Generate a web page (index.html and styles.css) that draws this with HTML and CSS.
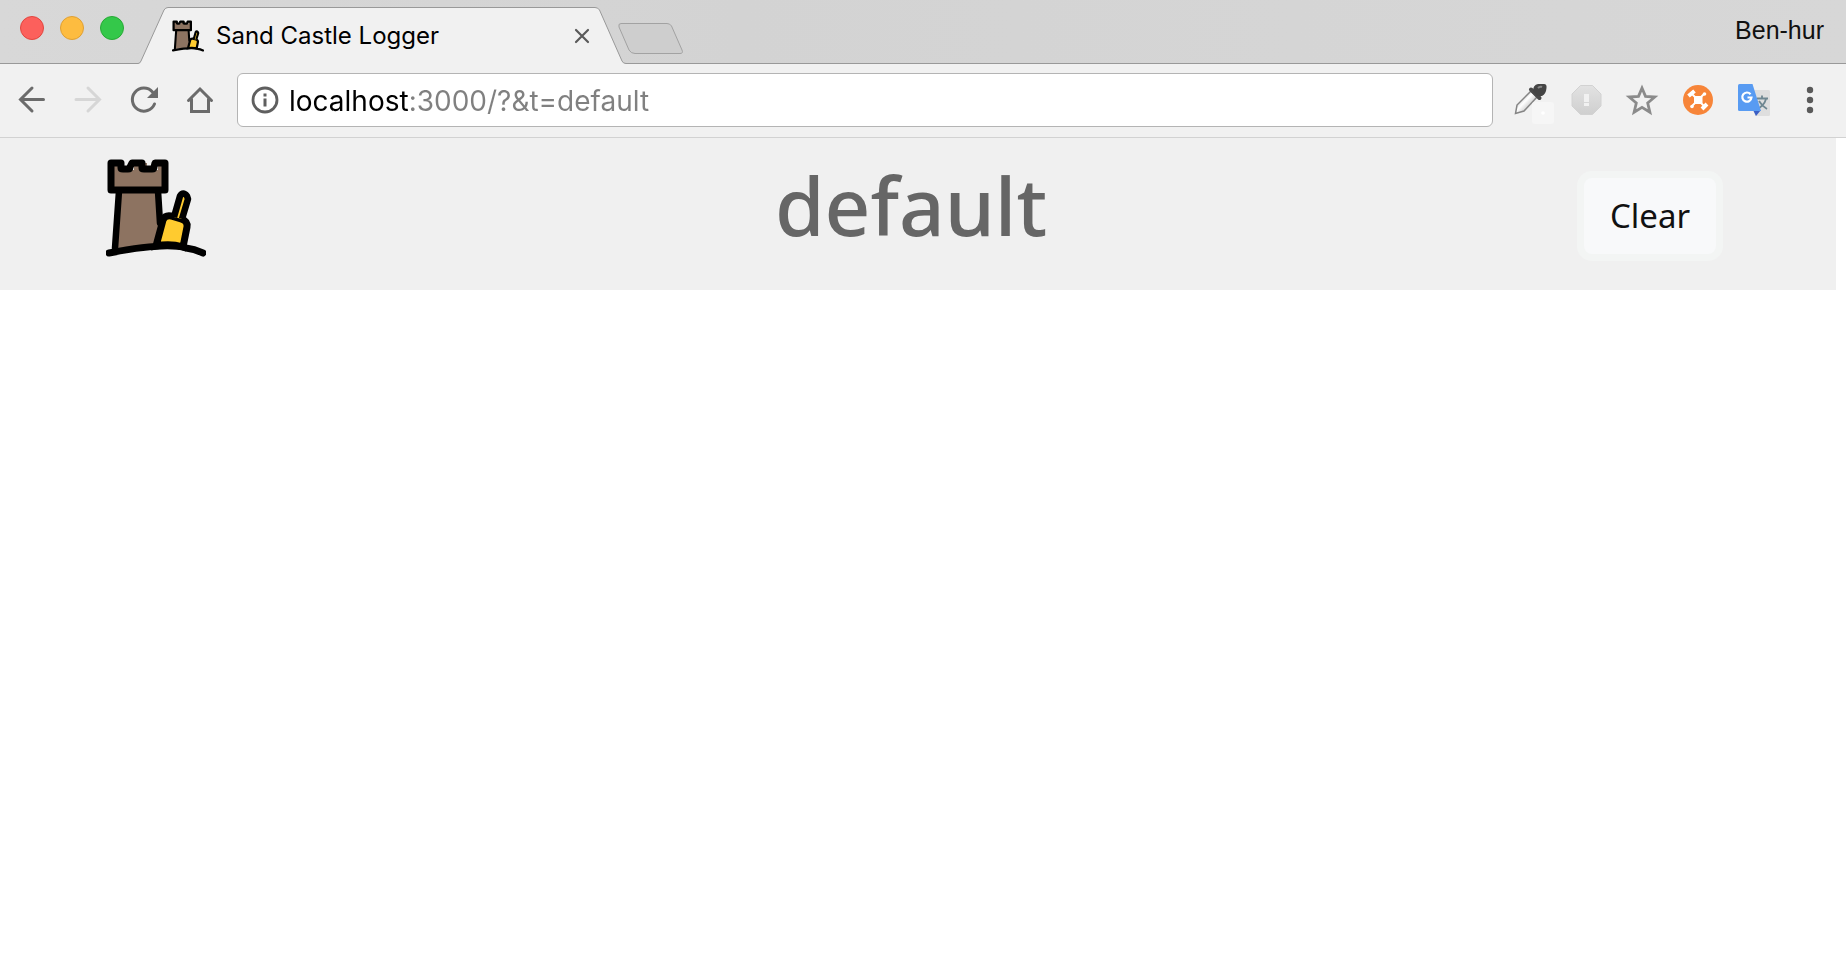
FILE: index.html
```html
<!DOCTYPE html>
<html lang="en">
<head>
<meta charset="utf-8">
<title>Sand Castle Logger</title>
<link rel="stylesheet" href="styles.css">
</head>
<body>
<svg class="symbols" aria-hidden="true">
  <symbol id="castle" viewBox="0 0 100 98">
    <path d="M16 29 L9 90 Q30 86 54 86 L51 29Z" fill="#8d7361"/>
    <path d="M5 4h11v7h12V4h13v7h11V4h7v27H5z" fill="#8d7361"/>
    <g fill="none" stroke="#000" stroke-linecap="round" stroke-linejoin="round">
      <path d="M5 4h10v5q0 1 2 1h5q2 0 2-2l2-4h10v5q0 1 2 1h8q2 0 2-2l1-4h10v27H5z" stroke-width="7"/>
      <path d="M13 32 L9 89 M52 32 L54 64" stroke-width="6.500"/>
    </g>
    <path d="M57 61 Q59 56 65 57 L75 60 Q82 62 81 68 L77 88 Q64 84 50 87Z" fill="#ffcb2f" stroke="#000" stroke-width="7"/>
    <path d="M68 58 L74 37 Q77 32 81 37 L82 40 L76 60" fill="#ffcb2f" stroke="#000" stroke-width="6.500" stroke-linejoin="round"/>
    <path d="M3 94 Q60 83 80 89 Q88 90 97 94" fill="none" stroke="#000" stroke-width="7" stroke-linecap="round"/>
  </symbol>
</svg>

<div class="tabstrip">
  <div class="lights">
    <button class="light close" aria-label="Close window"></button>
    <button class="light minimize" aria-label="Minimize window"></button>
    <button class="light zoom" aria-label="Zoom window"></button>
  </div>
  <div class="tab">
    <svg class="tab-shape" viewBox="0 0 488 57" aria-hidden="true">
      <path d="M0 56.5 Q2 56.500 3 54 L26 3 Q27.500 .5 30 .5 H457 Q460 .5 461.500 3 L484 54 Q485 56.500 488 56.500 V57 H0Z" fill="#f1f1f1"/>
      <path d="M0 56.500 Q2 56.500 3 54 L26 3 Q27.500 .5 30 .5 H457 Q460 .5 461.500 3 L484 54 Q485 56.500 488 56.500" fill="none" stroke="#999"/>
    </svg>
    <svg class="favicon" aria-hidden="true"><use href="#castle"/></svg>
    <span class="tab-title">Sand Castle Logger</span>
    <button class="tab-close" aria-label="Close tab">
      <svg viewBox="0 0 16 16"><path d="M2 2 14 14M14 2 2 14" stroke="#5a5a5a" stroke-width="2.200" stroke-linecap="round"/></svg>
    </button>
  </div>
  <button class="new-tab" aria-label="New tab">
    <svg viewBox="0 0 66 32"><path d="M3 .5 H49 Q52 .5 53.500 3 L64 27 Q65.500 30.500 62 30.500 H17 Q13 30.500 11 27 L1 4 Q0 .5 3 .5Z" fill="#cecece" stroke="#a2a2a2"/></svg>
  </button>
  <button class="profile">Ben-hur</button>
</div>

<div class="toolbar">
  <button class="tool" aria-label="Back"><svg viewBox="0 0 56 54"><path d="M39.500 26.500H17M28 15 16.500 26.500 28 38" class="line"/></svg></button>
  <button class="tool" aria-label="Forward" disabled><svg viewBox="0 0 56 54"><path d="M16 26.500H39M28 15 39.500 26.500 28 38" class="line faint"/></svg></button>
  <button class="tool" aria-label="Reload"><svg viewBox="0 0 56 54"><path d="M38.500 31A11.500 11.500 0 1 1 36.500 19" class="line"/><path d="M42 14V25H31Z" fill="#6b6b6b"/></svg></button>
  <button class="tool" aria-label="Home"><svg viewBox="0 0 56 54"><path d="M16.500 27.500 28 16 39.500 27.500M19.500 26V38.500H36.500V26" class="line"/></svg></button>
  <div class="omnibox">
    <svg class="info" viewBox="0 0 28 28" aria-hidden="true"><circle cx="14" cy="14" r="12" fill="none" stroke="#5f5f5f" stroke-width="2.800"/><path d="M12.500 7.500h3v3h-3zM12.500 12.500h3v8h-3z" fill="#5f5f5f"/></svg>
    <input class="url" type="text" aria-label="Address" value="localhost:3000/?&amp;t=default">
  </div>
  <button class="tool" aria-label="Color picker"><svg viewBox="0 0 56 54">
    <defs><linearGradient id="glass" x1="0" y1="0" x2="1" y2="1"><stop offset="0" stop-color="#777"/><stop offset=".45" stop-color="#fff"/><stop offset="1" stop-color="#888"/></linearGradient></defs>
    <path d="M29 18 15 32 13.500 40.500 22 38 35 24Z" fill="url(#glass)" stroke="#858585" stroke-width="1.500"/>
    <path d="M29 16.500 37.500 25" stroke="#4a4a4a" stroke-width="4" stroke-linecap="round"/>
    <path d="M31 18Q31 12 36 11H42Q45 11 44.500 15Q44 21 40 23L35 23Z" fill="#454545"/>
    <path d="M36 15q2-2 4-1" stroke="#888" stroke-width="2" fill="none"/>
    <rect x="30" y="29" width="22" height="22" rx="3" fill="#f6f6f6"/><circle cx="41" cy="40" r="1.800" fill="#fff"/>
  </svg></button>
  <button class="tool" aria-label="Blocker"><svg viewBox="0 0 56 54">
    <defs><linearGradient id="oct" x1="0" y1="0" x2="0" y2="1"><stop offset="0" stop-color="#e2e2e2"/><stop offset="1" stop-color="#cfcfcf"/></linearGradient></defs>
    <path d="M22.500 12.500h12l8.500 8.500v12l-8.500 8.500h-12L14 33V21Z" fill="url(#oct)" stroke="#d2d2d2"/><path d="M26 21h5v8h-5zM26 30h5v3h-5z" fill="#f1f1f1"/>
  </svg></button>
  <button class="tool" aria-label="Bookmark"><svg viewBox="0 0 56 54"><path d="M28 15 31.500 23.300 40.800 24 33.700 30 35.900 39.200 28 34.400 20.100 39.200 22.300 30 15.200 24 24.500 23.300Z" fill="none" stroke="#8b8b8b" stroke-width="2.800"/></svg></button>
  <button class="tool" aria-label="Extension"><svg viewBox="0 0 56 54">
    <circle cx="28" cy="27" r="15" fill="#f78539"/>
    <g stroke="#fff"><path d="M22 21 34 33M34 21 22 33" stroke-width="1.800"/><path d="M18.500 23 24.500 18M32 36 37 31" stroke-width="4"/></g>
    <rect x="24" y="23" width="8.500" height="8" rx="1.500" fill="#fff"/><circle cx="34.500" cy="21" r="1.800" fill="#fff"/><circle cx="22" cy="33.500" r="1.800" fill="#fff"/>
  </svg></button>
  <button class="tool" aria-label="Translate"><svg viewBox="0 0 56 54">
    <path d="M27 17H42.500Q44 17 44 18.500V41.500Q44 43 42.500 43H29Z" fill="#dedede"/>
    <path d="M31 25.500H42M36 22.500V25.500M40 26Q38 33 31 36M33 28Q36 33 41 36" stroke="#6f8791" stroke-width="1.800" fill="none"/>
    <path d="M27 37H35L30 43Z" fill="#3b5fc4"/>
    <path d="M13.500 11H26.500L35 38H13.500Q12 38 12 36.500V12.500Q12 11 13.500 11Z" fill="#589bf2"/>
    <path d="M24.500 21.200A4.600 4.600 0 1 0 25.500 24.500H21.500" fill="none" stroke="#fff" stroke-width="2.200"/>
  </svg></button>
  <button class="tool" aria-label="Menu"><svg viewBox="0 0 56 54"><g fill="#5a5a5a"><circle cx="28" cy="17" r="3.200"/><circle cx="28" cy="27" r="3.200"/><circle cx="28" cy="37" r="3.200"/></g></svg></button>
</div>

<main class="page">
  <header class="header">
    <svg class="logo" role="img" aria-label="Sand Castle"><use href="#castle"/></svg>
    <h1 class="heading">default</h1>
    <button class="clear">Clear</button>
  </header>
</main>
</body>
</html>
```

FILE: styles.css
```css
* { box-sizing: border-box; }
body { margin: 0; background: #fff; font-family: "Noto Sans", sans-serif; }
button { border: 0; padding: 0; background: none; font: inherit; color: inherit; }
svg { display: block; }
.symbols { position: absolute; width: 0; height: 0; }

.tabstrip {
  display: flex;
  align-items: flex-end;
  height: 64px;
  padding: 0 22px 0 20px;
  background: linear-gradient(to right, #d8d8d8, #d3d3d3 40%, #d7d7d7);
  box-shadow: inset 0 -1px #999;
}
.lights { display: flex; gap: 16px; align-self: flex-start; padding-top: 16px; }
.light { width: 24px; height: 24px; border-radius: 50%; border: 1px solid; }
.close { background: #fc605c; border-color: #e2463f; }
.minimize { background: #fdbc40; border-color: #dfa034; }
.zoom { background: #34c84a; border-color: #27aa35; }

.tab {
  position: relative;
  display: flex;
  align-items: center;
  width: 488px;
  height: 57px;
  margin-left: 14px;
  padding: 0 36px 0 34px;
}
.tab-shape { position: absolute; inset: 0; width: 100%; height: 100%; }
.favicon { position: relative; width: 32px; height: 32px; }
.tab-title { position: relative; flex: 1; margin-left: 12px; font: 24px/32px Inter, sans-serif; color: #000; }
.tab-close { position: relative; width: 16px; height: 16px; }
.new-tab { position: relative; width: 66px; height: 32px; margin: 0 0 9px -8px; }
.profile { margin-left: auto; padding-bottom: 20px; font: 25px/28px "Liberation Sans", sans-serif; color: #111; }

.toolbar {
  display: flex;
  align-items: center;
  height: 74px;
  padding: 0 8px 2px 4px;
  background: #f1f1f1;
  border-bottom: 1px solid #d2d2d2;
}
.tool { flex: none; width: 56px; height: 54px; }
.line { fill: none; stroke: #6b6b6b; stroke-width: 3; stroke-linecap: round; }
.faint { stroke: #d6d6d6; }
.omnibox {
  display: flex;
  flex: 1;
  align-items: center;
  height: 54px;
  margin: 0 9px;
  padding: 0 13px;
  background: #fff;
  border: 1px solid #b4b4b4;
  border-radius: 6px;
}
.info { flex: none; width: 28px; height: 28px; }
.url {
  flex: 1;
  min-width: 0;
  margin-left: 10px;
  padding: 2px 0 0;
  border: 0;
  outline: 0;
  font: 28px/40px Inter, sans-serif;
  color: transparent;
  background: linear-gradient(to right, #000 120px, #808080 120px);
  -webkit-background-clip: text;
  background-clip: text;
}

.page { padding-right: 10px; }
.header {
  display: grid;
  grid-template-columns: 1fr auto 1fr;
  align-items: start;
  height: 152px;
  padding: 20px 120px 0 106px;
  background: #f0f0f0;
}
.logo { width: 100px; height: 98px; margin-top: 1px; }
.heading { margin: 0; font-size: 80px; line-height: 94px; font-weight: 500; color: #666; }
.clear {
  justify-self: end;
  width: 132px;
  height: 76px;
  margin-top: 20px;
  padding-bottom: 2px;
  border-radius: 8px;
  background: #f8f9fa;
  box-shadow: 0 0 0 7px #f3f5f4;
  font-size: 33px;
  color: #111;
}
```
